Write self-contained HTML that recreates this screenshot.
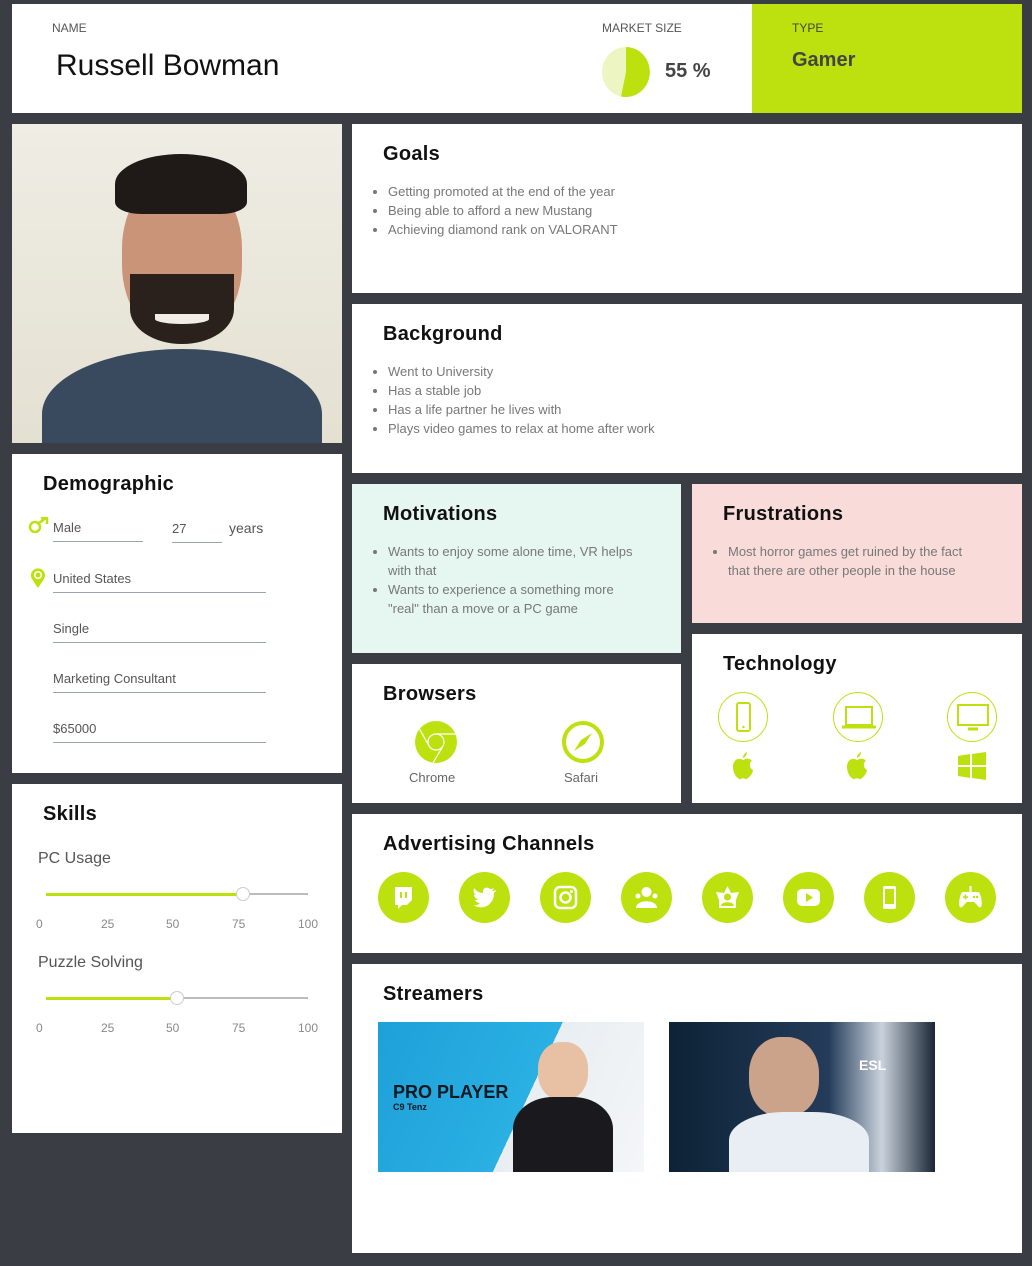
<!DOCTYPE html>
<html><head><style>
*{box-sizing:border-box;margin:0;padding:0}
body{width:1032px;height:1266px;background:#3a3d43;font-family:"Liberation Sans",sans-serif;position:relative;overflow:hidden;color:#222}
.c{position:absolute;background:#fff}
h2{position:absolute;left:31px;top:19px;font-size:20px;font-weight:bold;color:#111;letter-spacing:.3px}
ul{position:absolute;left:36px;top:58px;font-size:13px;color:#777;line-height:19px;list-style:disc}
.lbl{font-size:12px;color:#555;position:absolute}
.f{position:absolute;left:41px;width:213px;border-bottom:1px solid #9aa3b0;font-size:13px;color:#555;padding-bottom:6px}
.ic{position:absolute;width:51px;height:51px;border-radius:50%;background:#bde10f;top:58px}
.ic svg{position:absolute;left:13px;top:13px}
.tc{position:absolute;width:50px;height:50px;border-radius:50%;border:1px solid #bde10f;top:58px}
.tk{font-size:12px;color:#888;position:absolute}
</style></head><body>
<div class="c" style="left:12px;top:4px;width:1010px;height:109px">
 <div class="lbl" style="left:40px;top:17px">NAME</div>
 <div style="position:absolute;left:44px;top:45px;font-size:30px;color:#111">Russell Bowman</div>
 <div class="lbl" style="left:590px;top:17px">MARKET SIZE</div>
 <svg style="position:absolute;left:590px;top:43px" width="48" height="50" viewBox="0 0 48 50"><ellipse cx="24" cy="25" rx="24" ry="25" fill="#edf6c3"/><path d="M24 25 L24 0 A24 25 0 1 1 19 49.5Z" fill="#bde10f"/></svg>
 <div style="position:absolute;left:653px;top:56px;font-size:20px;font-weight:bold;color:#444">55 %</div>
 <div style="position:absolute;left:740px;top:0;width:270px;height:109px;background:#bde10f">
  <div class="lbl" style="left:40px;top:17px;color:#444">TYPE</div>
  <div style="position:absolute;left:40px;top:45px;font-size:20px;font-weight:bold;color:#444">Gamer</div>
 </div>
</div>
<div class="c" style="left:12px;top:124px;width:330px;height:319px;background:linear-gradient(#efede4,#e4e0d2);overflow:hidden">
 <div style="position:absolute;left:30px;top:225px;width:280px;height:130px;border-radius:50% 50% 0 0;background:#3a4a5e"></div>
 <div style="position:absolute;left:110px;top:50px;width:120px;height:165px;border-radius:45%;background:#c99478"></div>
 <div style="position:absolute;left:103px;top:30px;width:132px;height:60px;border-radius:50% 50% 20% 20%;background:#1f1a17"></div>
 <div style="position:absolute;left:118px;top:150px;width:104px;height:70px;border-radius:0 0 50% 50%;background:#2a211c"></div>
 <div style="position:absolute;left:143px;top:190px;width:54px;height:10px;border-radius:0 0 50% 50%;background:#f2ece6"></div>
</div>
<div class="c" style="left:12px;top:454px;width:330px;height:319px">
 <h2>Demographic</h2>
 <svg style="position:absolute;left:16px;top:63px" width="22" height="16" viewBox="0 0 22 16"><circle cx="7" cy="10" r="5" fill="none" stroke="#bde10f" stroke-width="2.5"/><path d="M11 6 L18 1 M13 1 H19 V7" fill="none" stroke="#bde10f" stroke-width="2.5"/></svg>
 <div class="f" style="top:66px;width:90px">Male</div>
 <div class="f" style="left:160px;top:67px;width:50px">27</div>
 <div style="position:absolute;left:217px;top:66px;font-size:14px;color:#555">years</div>
 <svg style="position:absolute;left:18px;top:114px" width="16" height="20" viewBox="0 0 16 20"><path d="M8 20 L2 11 A7 7 0 1 1 14 11Z" fill="#bde10f"/><circle cx="8" cy="7" r="4" fill="#fff"/><circle cx="8" cy="7" r="2.5" fill="#bde10f"/></svg>
 <div class="f" style="top:117px">United States</div>
 <div class="f" style="top:167px">Single</div>
 <div class="f" style="top:217px">Marketing Consultant</div>
 <div class="f" style="top:267px">$65000</div>
</div>
<div class="c" style="left:12px;top:784px;width:330px;height:349px">
 <h2>Skills</h2>
 <div style="position:absolute;left:26px;top:66px;font-size:16px;color:#555">PC Usage</div>
 <div style="position:absolute;left:34px;top:109px;width:262px;height:2px;background:#bbb"></div>
 <div style="position:absolute;left:34px;top:109px;width:197px;height:3px;background:#bde10f"></div>
 <div style="position:absolute;left:224px;top:103px;width:14px;height:14px;border-radius:50%;background:#fff;border:1px solid #ccc"></div>
 <div class="tk" style="left:24px;top:133px">0</div><div class="tk" style="left:89px;top:133px">25</div><div class="tk" style="left:154px;top:133px">50</div><div class="tk" style="left:220px;top:133px">75</div><div class="tk" style="left:286px;top:133px">100</div>
 <div style="position:absolute;left:26px;top:170px;font-size:16px;color:#555">Puzzle Solving</div>
 <div style="position:absolute;left:34px;top:213px;width:262px;height:2px;background:#bbb"></div>
 <div style="position:absolute;left:34px;top:213px;width:131px;height:3px;background:#bde10f"></div>
 <div style="position:absolute;left:158px;top:207px;width:14px;height:14px;border-radius:50%;background:#fff;border:1px solid #ccc"></div>
 <div class="tk" style="left:24px;top:237px">0</div><div class="tk" style="left:89px;top:237px">25</div><div class="tk" style="left:154px;top:237px">50</div><div class="tk" style="left:220px;top:237px">75</div><div class="tk" style="left:286px;top:237px">100</div>
</div>
<div class="c" style="left:352px;top:124px;width:670px;height:169px"><h2>Goals</h2><ul><li>Getting promoted at the end of the year</li><li>Being able to afford a new Mustang</li><li>Achieving diamond rank on VALORANT</li></ul></div>
<div class="c" style="left:352px;top:304px;width:670px;height:169px"><h2>Background</h2><ul><li>Went to University</li><li>Has a stable job</li><li>Has a life partner he lives with</li><li>Plays video games to relax at home after work</li></ul></div>
<div class="c" style="left:352px;top:484px;width:329px;height:169px;background:#e6f7f2"><h2>Motivations</h2><ul style="width:250px"><li>Wants to enjoy some alone time, VR helps with that</li><li>Wants to experience a something more "real" than a move or a PC game</li></ul></div>
<div class="c" style="left:692px;top:484px;width:330px;height:139px;background:#f9dcd9"><h2>Frustrations</h2><ul style="width:245px"><li>Most horror games get ruined by the fact that there are other people in the house</li></ul></div>
<div class="c" style="left:352px;top:664px;width:329px;height:139px"><h2>Browsers</h2>
 <svg style="position:absolute;left:63px;top:57px" width="42" height="42" viewBox="0 0 42 42"><circle cx="21" cy="21" r="21" fill="#bde10f"/><circle cx="21" cy="21" r="8" fill="none" stroke="#fff" stroke-width="1.2"/><path d="M21 13 H41 M14 25 L4 7 M28 25 L18 42" stroke="#fff" stroke-width="1.2"/></svg>
 <div style="position:absolute;left:57px;top:106px;font-size:13px;color:#666">Chrome</div>
 <svg style="position:absolute;left:210px;top:57px" width="42" height="42" viewBox="0 0 42 42"><circle cx="21" cy="21" r="19" fill="none" stroke="#bde10f" stroke-width="4"/><path d="M30 12 L23 23 L12 30 L19 19Z" fill="#bde10f"/></svg>
 <div style="position:absolute;left:212px;top:106px;font-size:13px;color:#666">Safari</div>
</div>
<div class="c" style="left:692px;top:634px;width:330px;height:169px"><h2>Technology</h2>
 <div class="tc" style="left:26px"><svg width="50" height="50" viewBox="0 0 50 50"><rect x="18" y="10" width="13" height="28" rx="2" fill="none" stroke="#bde10f" stroke-width="2"/><circle cx="24.5" cy="34" r="1.2" fill="#bde10f"/></svg></div>
 <div class="tc" style="left:141px"><svg width="50" height="50" viewBox="0 0 50 50"><rect x="12" y="14" width="26" height="18" fill="none" stroke="#bde10f" stroke-width="2"/><path d="M8 34 H42" stroke="#bde10f" stroke-width="3"/></svg></div>
 <div class="tc" style="left:255px"><svg width="50" height="50" viewBox="0 0 50 50"><rect x="10" y="12" width="30" height="20" fill="none" stroke="#bde10f" stroke-width="2"/><path d="M20 36 H30" stroke="#bde10f" stroke-width="3"/></svg></div>
 <svg style="position:absolute;left:40px;top:118px" width="22" height="28" viewBox="0 0 22 28"><path d="M11 8 C6 5 1 8 1 15 C1 22 6 28 9 27 C10 26 12 26 13 27 C16 28 21 21 21 18 C17 16 17 10 20 9 C17 5 13 7 11 8Z M11 6 C11 3 13 1 15 0 C15 3 13 5 11 6Z" fill="#bde10f"/></svg>
 <svg style="position:absolute;left:154px;top:118px" width="22" height="28" viewBox="0 0 22 28"><path d="M11 8 C6 5 1 8 1 15 C1 22 6 28 9 27 C10 26 12 26 13 27 C16 28 21 21 21 18 C17 16 17 10 20 9 C17 5 13 7 11 8Z M11 6 C11 3 13 1 15 0 C15 3 13 5 11 6Z" fill="#bde10f"/></svg>
 <svg style="position:absolute;left:266px;top:118px" width="28" height="28" viewBox="0 0 28 28"><path d="M0 4 L12 2 V13 H0Z M14 2 L28 0 V13 H14Z M0 15 H12 V26 L0 24Z M14 15 H28 V28 L14 26Z" fill="#bde10f"/></svg>
</div>
<div class="c" style="left:352px;top:814px;width:670px;height:139px"><h2>Advertising Channels</h2>
 <div class="ic" style="left:26px"><svg width="25" height="25" viewBox="0 0 25 25"><path d="M4 2 H21 V15 L16 20 H11 L7 24 V20 H4Z" fill="#fff"/><path d="M10 7 V13 M15 7 V13" stroke="#bde10f" stroke-width="2"/></svg></div>
 <div class="ic" style="left:107px"><svg width="25" height="25" viewBox="0 0 25 25"><path d="M24 5 C22 6 21 6 20 6 C22 4 22 3 22 3 C21 4 19 4 18 4 C15 1 10 3 11 8 C7 8 4 6 2 3 C1 6 2 9 4 10 C3 10 2 10 2 9 C2 12 4 14 6 14 C5 15 4 15 3 15 C4 17 6 18 8 18 C6 20 3 21 1 20 C11 26 22 20 22 8 C23 7 24 6 24 5Z" fill="#fff"/></svg></div>
 <div class="ic" style="left:188px"><svg width="25" height="25" viewBox="0 0 25 25"><rect x="2" y="2" width="21" height="21" rx="5" fill="none" stroke="#fff" stroke-width="2.5"/><circle cx="12.5" cy="12.5" r="5" fill="none" stroke="#fff" stroke-width="2.5"/><circle cx="18.5" cy="6.5" r="1.5" fill="#fff"/></svg></div>
 <div class="ic" style="left:269px"><svg width="25" height="25" viewBox="0 0 25 25"><circle cx="12.5" cy="7" r="5" fill="#fff"/><path d="M2 23 C2 14 23 14 23 23Z" fill="#fff"/><circle cx="4" cy="11" r="2.5" fill="#fff"/><circle cx="21" cy="11" r="2.5" fill="#fff"/></svg></div>
 <div class="ic" style="left:350px"><svg width="25" height="25" viewBox="0 0 25 25"><path d="M12.5 1 L16 8 L24 7 L21 15 L21 23 H4 L4 15 L1 7 L9 8Z" fill="#fff"/><circle cx="12.5" cy="12" r="3.5" fill="#bde10f"/><path d="M6 21 C6 16 19 16 19 21Z" fill="#bde10f"/></svg></div>
 <div class="ic" style="left:431px"><svg width="25" height="25" viewBox="0 0 25 25"><rect x="1" y="4" width="23" height="17" rx="5" fill="#fff"/><path d="M10 8 L17 12.5 L10 17Z" fill="#bde10f"/></svg></div>
 <div class="ic" style="left:512px"><svg width="25" height="25" viewBox="0 0 25 25"><rect x="6" y="1" width="13" height="23" rx="2" fill="#fff"/><rect x="8" y="4" width="9" height="15" fill="#bde10f"/></svg></div>
 <div class="ic" style="left:593px"><svg width="25" height="25" viewBox="0 0 25 25"><path d="M12.5 1 V7" stroke="#fff" stroke-width="2"/><path d="M5 7 H20 C23 7 25 20 23 22 C21 24 18 18 16 17 H9 C7 18 4 24 2 22 C0 20 2 7 5 7Z" fill="#fff"/><path d="M5 12 H10 M7.5 9.5 V14.5" stroke="#bde10f" stroke-width="1.6"/><circle cx="16" cy="12" r="1.2" fill="#bde10f"/><circle cx="19" cy="12" r="1.2" fill="#bde10f"/></svg></div>
</div>
<div class="c" style="left:352px;top:964px;width:670px;height:289px"><h2>Streamers</h2>
 <div style="position:absolute;left:26px;top:58px;width:266px;height:150px;background:linear-gradient(115deg,#1ea0d8 0%,#2ab0e3 55%,#e8eef2 55%,#f4f6f8 100%);overflow:hidden">
  <div style="position:absolute;left:15px;top:60px;font-size:18px;font-weight:bold;color:#101820">PRO PLAYER</div>
  <div style="position:absolute;left:15px;top:80px;font-size:9px;font-weight:bold;color:#101820">C9 Tenz</div>
  <div style="position:absolute;left:160px;top:20px;width:50px;height:58px;border-radius:45%;background:#e8c0a4"></div>
  <div style="position:absolute;left:135px;top:75px;width:100px;height:80px;border-radius:40% 40% 0 0;background:#1a1a1e"></div>
 </div>
 <div style="position:absolute;left:317px;top:58px;width:266px;height:150px;background:linear-gradient(90deg,#0d2236,#243c5a 60%,#c9d2dc 80%,#1a2636);overflow:hidden">
  <div style="position:absolute;left:80px;top:15px;width:70px;height:80px;border-radius:45%;background:#caa38a"></div>
  <div style="position:absolute;left:60px;top:90px;width:140px;height:70px;border-radius:40% 40% 0 0;background:#e8eef4"></div>
  <div style="position:absolute;left:190px;top:35px;font-size:14px;font-weight:bold;color:#fff">ESL</div>
 </div>
</div>
</body></html>
